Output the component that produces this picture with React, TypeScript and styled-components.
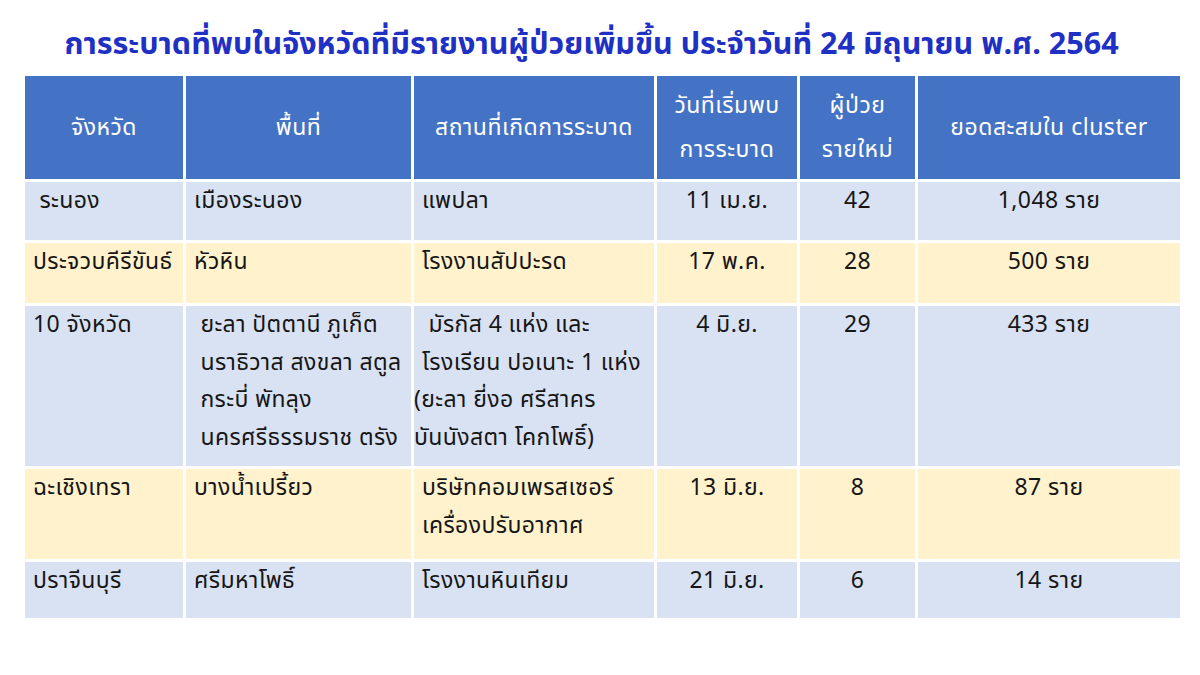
import styled, { createGlobalStyle } from "styled-components";

const GlobalStyle = createGlobalStyle`
    html, body {
        margin: 0;
        padding: 0;
        background: #ffffff;
    }
    body {
        font-family: "Noto Sans Thai", Tahoma, "Noto Sans", "DejaVu Sans", sans-serif;
    }
`;

type Tone = "blue" | "yellow";

// a line of cell text; flush lines sit at the cell edge with no indent
type Line = { text: string; flush?: boolean };

type Row = {
    tone: Tone;
    height: number;
    province: Line[];
    area: Line[];
    place: Line[];
    date: string;
    cases: string;
    total: string;
};

const rows: Row[] = [
    {
        tone: "blue",
        height: 58,
        province: [{ text: "\u00a0ระนอง" }],
        area: [{ text: "เมืองระนอง" }],
        place: [{ text: "แพปลา" }],
        date: "11 เม.ย.",
        cases: "42",
        total: "1,048 ราย",
    },
    {
        tone: "yellow",
        height: 60,
        province: [{ text: "ประจวบคีรีขันธ์" }],
        area: [{ text: "หัวหิน" }],
        place: [{ text: "โรงงานสัปปะรด" }],
        date: "17 พ.ค.",
        cases: "28",
        total: "500 ราย",
    },
    {
        tone: "blue",
        height: 160,
        province: [{ text: "10 จังหวัด" }],
        area: [
            { text: "\u00a0ยะลา ปัตตานี ภูเก็ต" },
            { text: "\u00a0นราธิวาส สงขลา สตูล" },
            { text: "\u00a0กระบี่ พัทลุง" },
            { text: "\u00a0นครศรีธรรมราช ตรัง" },
        ],
        place: [
            { text: "\u00a0มัรกัส 4 แห่ง และ" },
            { text: "โรงเรียน ปอเนาะ 1 แห่ง" },
            { text: "(ยะลา ยี่งอ ศรีสาคร", flush: true },
            { text: "บันนังสตา โคกโพธิ์)", flush: true },
        ],
        date: "4 มิ.ย.",
        cases: "29",
        total: "433 ราย",
    },
    {
        tone: "yellow",
        height: 90,
        province: [{ text: "ฉะเชิงเทรา" }],
        area: [{ text: "บางน้ำเปรี้ยว" }],
        place: [{ text: "บริษัทคอมเพรสเซอร์" }, { text: "เครื่องปรับอากาศ" }],
        date: "13 มิ.ย.",
        cases: "8",
        total: "87 ราย",
    },
    {
        tone: "blue",
        height: 56,
        province: [{ text: "ปราจีนบุรี" }],
        area: [{ text: "ศรีมหาโพธิ์" }],
        place: [{ text: "โรงงานหินเทียม" }],
        date: "21 มิ.ย.",
        cases: "6",
        total: "14 ราย",
    },
];

const headers = [
    ["จังหวัด"],
    ["พื้นที่"],
    ["สถานที่เกิดการระบาด"],
    ["วันที่เริ่มพบ", "การระบาด"],
    ["ผู้ป่วย", "รายใหม่"],
    ["ยอดสะสมใน cluster"],
];

const TextLines = ({ lines }: { lines: Line[] }) => (
    <>
        {lines.map((l) => (
            <CellLine key={l.text} $flush={l.flush}>
                {l.text}
            </CellLine>
        ))}
    </>
);

const App = () => {
    return (
        <>
            <GlobalStyle />
            <Page>
                <Title>
                    การระบาดที่พบในจังหวัดที่มีรายงานผู้ป่วยเพิ่มขึ้น ประจำวันที่ 24 มิถุนายน พ.ศ. 2564
                </Title>
                <Table>
                    {headers.map((lines, i) => (
                        <HeadCell key={`h${i}`}>
                            {lines.map((l) => (
                                <span key={l}>{l}</span>
                            ))}
                        </HeadCell>
                    ))}
                    {rows.map((r, i) => (
                        <RowGroup key={i}>
                            <Cell $tone={r.tone} $h={r.height}>
                                <TextLines lines={r.province} />
                            </Cell>
                            <Cell $tone={r.tone} $h={r.height}>
                                <TextLines lines={r.area} />
                            </Cell>
                            <Cell $tone={r.tone} $h={r.height}>
                                <TextLines lines={r.place} />
                            </Cell>
                            <Cell $tone={r.tone} $h={r.height} $center>
                                <span>{r.date}</span>
                            </Cell>
                            <Cell $tone={r.tone} $h={r.height} $center>
                                <span>{r.cases}</span>
                            </Cell>
                            <Cell $tone={r.tone} $h={r.height} $center>
                                <span>{r.total}</span>
                            </Cell>
                        </RowGroup>
                    ))}
                </Table>
            </Page>
        </>
    );
};

const Page = styled.div`
    width: 1200px;
    height: 675px;
    box-sizing: border-box;
    padding: 22px 20px 0 25px;
    overflow: hidden;
`;

const Title = styled.h1`
    margin: 0;
    padding-right: 22px;
    height: 54px;
    text-align: center;
    font-size: 30.5px;
    line-height: 47px;
    font-weight: 700;
    color: #1f30c4;
    white-space: nowrap;
`;

const Table = styled.div`
    display: grid;
    grid-template-columns: 158px 225px 240px 140px 115px 262px;
    gap: 3px;
    width: 1155px;
`;

const RowGroup = styled.div`
    display: contents;
`;

const HeadCell = styled.div`
    height: 103px;
    background: #4472c4;
    color: #ffffff;
    font-size: 23px;
    letter-spacing: 0.5px;
    line-height: 44px;
    display: flex;
    flex-direction: column;
    align-items: center;
    justify-content: center;
    text-align: center;
    white-space: nowrap;
`;

const Cell = styled.div<{ $tone: Tone; $h: number; $center?: boolean }>`
    height: ${({ $h }) => $h}px;
    box-sizing: border-box;
    background: ${({ $tone }) => ($tone === "blue" ? "#d9e2f3" : "#fff2cc")};
    color: #161616;
    font-size: 23px;
    letter-spacing: 0.4px;
    line-height: 37.5px;
    padding-top: 1px;
    display: flex;
    flex-direction: column;
    align-items: ${({ $center }) => ($center ? "center" : "flex-start")};
    white-space: pre;
`;

const CellLine = styled.span<{ $flush?: boolean }>`
    padding-left: ${({ $flush }) => ($flush ? "0" : "8px")};
`;

export default App;
